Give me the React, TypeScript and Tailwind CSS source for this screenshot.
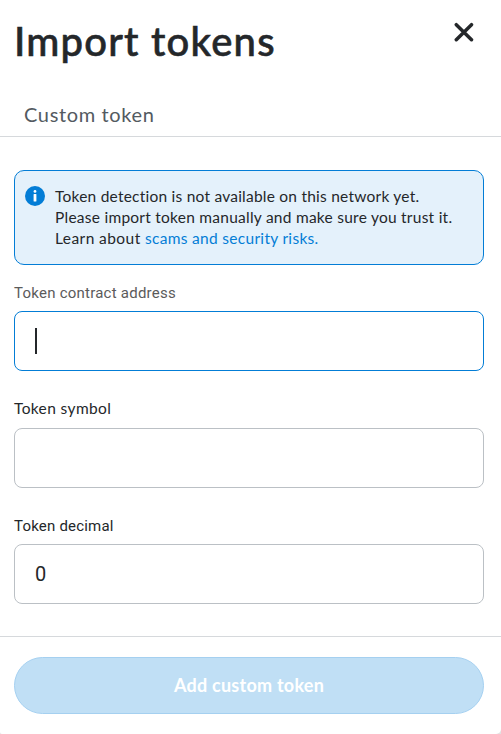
import React from 'react';

const euclid = "font-['Lato','Open_Sans',sans-serif]";
const roboto = "font-['Roboto','Liberation_Sans',sans-serif]";

function CloseIcon() {
  return (
    <svg width="20" height="20" viewBox="0 0 20 20" fill="none" stroke="#24272a" strokeWidth="3.5" strokeLinecap="round">
      <path d="M2.3 2.7 L17.5 17.7 M17.5 2.7 L2.3 17.7" />
    </svg>
  );
}

function InfoIcon() {
  return (
    <svg className="block shrink-0" width="20" height="20" viewBox="0 0 20 20">
      <circle cx="10" cy="10" r="10" fill="#037dd6" />
      <circle cx="10" cy="5.4" r="1.4" fill="#fff" />
      <rect x="8.6" y="8" width="2.8" height="7.6" rx="0.5" fill="#fff" />
    </svg>
  );
}

export default function App() {
  return (
    <div className="bg-[#e2e2e2]">
      <div className={`flex h-[734px] w-[501px] flex-col overflow-hidden rounded-bl-[2px] rounded-br-[5px] bg-white text-[#24272a] ${euclid}`}>
        <header className="flex h-[87px] shrink-0 items-start justify-between pl-[14px] pr-[27px]">
          <h1 className="mt-[16px] whitespace-nowrap text-[40px] font-medium leading-[50px] tracking-[1.2px] [-webkit-text-stroke:0.6px_#24272a]">Import tokens</h1>
          <button className="mt-[22px]" aria-label="Close">
            <CloseIcon />
          </button>
        </header>
        <nav className="flex h-[50px] shrink-0 border-b border-[#d6d9dc] pl-6">
          <span className="pt-[13px] text-[20px] leading-7 tracking-[0.65px] text-[#535a61]">Custom token</span>
        </nav>
        <main className="flex shrink-0 flex-col pl-[14px] pr-[17px] pt-[33px]">
          <section className="flex h-[95px] gap-[10px] rounded-[10px] border border-[#037dd6] bg-[#e4f1fb] pl-[10px] pt-[15px]">
            <InfoIcon />
            <div className="whitespace-nowrap text-[15.5px] leading-[21px]">
              <p className="tracking-[0.23px]">Token detection is not available on this network yet.</p>
              <p className="tracking-[0.25px]">Please import token manually and make sure you trust it.</p>
              <p>
                <span className="tracking-[0.43px]">Learn about </span>
                <a className="tracking-[0.3px] text-[#037dd6]">scams and security risks.</a>
              </p>
            </div>
          </section>
          <label className={`mt-[18px] block h-[28px] text-[15px] leading-5 tracking-[0.24px] text-[#5b5b5b] ${roboto}`}>Token contract address</label>
          <div className="flex h-[60px] items-center rounded-lg border border-[#037dd6] pl-5">
            <span className="h-[26px] w-[2px] bg-[#24272a]" />
          </div>
          <label className="mt-[27px] block h-[30px] text-[15.5px] leading-5 tracking-[0.38px]">Token symbol</label>
          <div className="h-[60px] rounded-lg border border-[#bbc0c5]" />
          <label className={`mt-[28px] block h-[28px] text-[15px] leading-5 tracking-[0.2px] ${roboto}`}>Token decimal</label>
          <div className={`flex h-[60px] items-center rounded-lg border border-[#bbc0c5] pl-5 text-[20px] ${roboto}`}>0</div>
        </main>
        <footer className="mt-8 border-t border-[#d6d9dc] pl-[14px] pr-[17px] pt-5">
          <button className="flex h-[57px] w-full items-center justify-center rounded-full border border-[#a5d0f0] bg-[#c0dff5] text-[18px] font-bold tracking-[0.25px] text-white">
            Add custom token
          </button>
        </footer>
      </div>
    </div>
  );
}
